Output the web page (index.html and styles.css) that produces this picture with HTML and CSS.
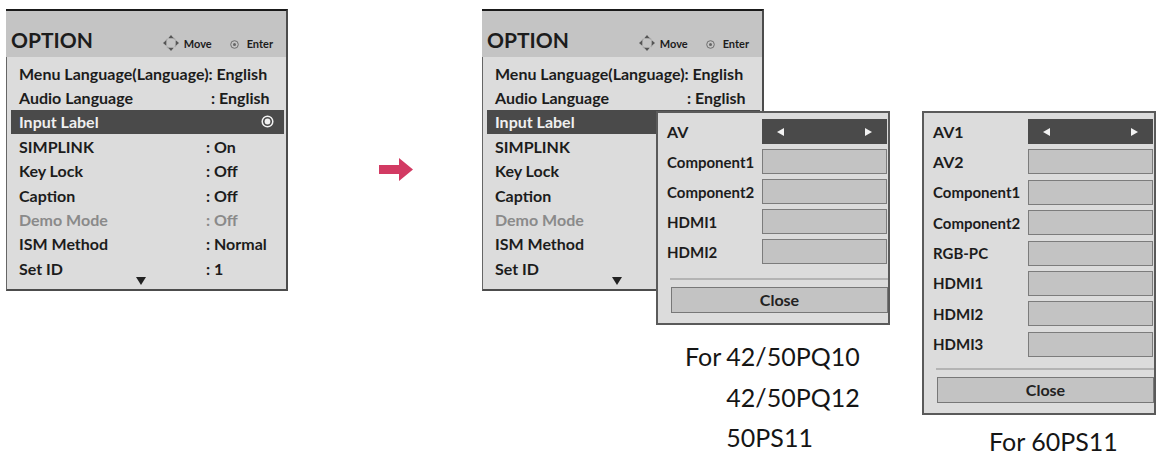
FILE: index.html
```html
<!DOCTYPE html>
<html lang="en">
<head>
    <meta charset="UTF-8">
    <meta name="viewport" content="width=device-width, initial-scale=1.0">
    <title>OPTION - Input Label</title>
    <link rel="stylesheet" href="styles.css">
</head>
<body>
<div class="page">

    <!-- Menú OPTION (antes) -->
    <section class="menu">
        <div class="menu-head">
            <h2 class="menu-title">OPTION</h2>
            <span class="hint hint-move">
                <svg class="icon-move" width="18" height="18" viewBox="0 0 18 18">
                    <circle cx="9" cy="9" r="5.5" fill="none" stroke="#a8a8a8" stroke-width="1.3" stroke-dasharray="3.2 5.4" stroke-dashoffset="-1.2"/>
                    <polygon points="9,1 6.3,4.3 11.7,4.3" fill="#555"/>
                    <polygon points="9,17 6.3,13.7 11.7,13.7" fill="#555"/>
                    <polygon points="1,9 4.3,6.3 4.3,11.7" fill="#555"/>
                    <polygon points="17,9 13.7,6.3 13.7,11.7" fill="#555"/>
                </svg>Move</span>
            <span class="hint hint-enter">
                <svg class="icon-enter" width="9" height="9" viewBox="0 0 9 9">
                    <circle cx="4.5" cy="4.5" r="3.8" fill="none" stroke="#666" stroke-width="0.9"/>
                    <circle cx="4.5" cy="4.5" r="1.5" fill="#666"/>
                </svg>Enter</span>
        </div>
        <div class="menu-body">
            <ul class="menu-list">
                <li class="menu-row">Menu Language(Language): English</li>
                <li class="menu-row"><span class="row-label">Audio Language</span><span class="row-value row-value-wide">: English</span></li>
                <li class="menu-row menu-row-on"><span class="row-label">Input Label</span>
                    <svg class="icon-radio" width="13" height="13" viewBox="0 0 13 13">
                        <circle cx="6.5" cy="6.5" r="5.3" fill="none" stroke="#f2f2f2" stroke-width="1.5"/>
                        <circle cx="6.5" cy="6.5" r="2.9" fill="#f2f2f2"/>
                    </svg>
                </li>
                <li class="menu-row"><span class="row-label">SIMPLINK</span><span class="row-value">: On</span></li>
                <li class="menu-row"><span class="row-label">Key Lock</span><span class="row-value">: Off</span></li>
                <li class="menu-row"><span class="row-label">Caption</span><span class="row-value">: Off</span></li>
                <li class="menu-row menu-row-off"><span class="row-label">Demo Mode</span><span class="row-value">: Off</span></li>
                <li class="menu-row"><span class="row-label">ISM Method</span><span class="row-value">: Normal</span></li>
                <li class="menu-row"><span class="row-label">Set ID</span><span class="row-value">: 1</span></li>
            </ul>
            <svg class="more" width="10" height="8" viewBox="0 0 10 8"><polygon points="0,0 10,0 5,8" fill="#222"/></svg>
        </div>
    </section>

    <!-- Flecha -->
    <svg class="arrow" width="34" height="23" viewBox="0 0 34 23">
        <polygon points="0,7 20,7 20,0 34,11.5 20,23 20,16 0,16" fill="#d23a63"/>
    </svg>

    <!-- Menú OPTION con ventana Input Label -->
    <div class="stack">
        <section class="menu">
            <div class="menu-head">
                <h2 class="menu-title">OPTION</h2>
                <span class="hint hint-move">
                    <svg class="icon-move" width="18" height="18" viewBox="0 0 18 18">
                        <circle cx="9" cy="9" r="5.5" fill="none" stroke="#a8a8a8" stroke-width="1.3" stroke-dasharray="3.2 5.4" stroke-dashoffset="-1.2"/>
                        <polygon points="9,1 6.3,4.3 11.7,4.3" fill="#555"/>
                        <polygon points="9,17 6.3,13.7 11.7,13.7" fill="#555"/>
                        <polygon points="1,9 4.3,6.3 4.3,11.7" fill="#555"/>
                        <polygon points="17,9 13.7,6.3 13.7,11.7" fill="#555"/>
                    </svg>Move</span>
                <span class="hint hint-enter">
                    <svg class="icon-enter" width="9" height="9" viewBox="0 0 9 9">
                        <circle cx="4.5" cy="4.5" r="3.8" fill="none" stroke="#666" stroke-width="0.9"/>
                        <circle cx="4.5" cy="4.5" r="1.5" fill="#666"/>
                    </svg>Enter</span>
            </div>
            <div class="menu-body">
                <ul class="menu-list">
                    <li class="menu-row">Menu Language(Language): English</li>
                    <li class="menu-row"><span class="row-label">Audio Language</span><span class="row-value row-value-wide">: English</span></li>
                    <li class="menu-row menu-row-on"><span class="row-label">Input Label</span></li>
                    <li class="menu-row"><span class="row-label">SIMPLINK</span></li>
                    <li class="menu-row"><span class="row-label">Key Lock</span></li>
                    <li class="menu-row"><span class="row-label">Caption</span></li>
                    <li class="menu-row menu-row-off"><span class="row-label">Demo Mode</span></li>
                    <li class="menu-row"><span class="row-label">ISM Method</span></li>
                    <li class="menu-row"><span class="row-label">Set ID</span></li>
                </ul>
                <svg class="more" width="10" height="8" viewBox="0 0 10 8"><polygon points="0,0 10,0 5,8" fill="#222"/></svg>
            </div>
        </section>

        <div class="stack-popup">
            <div class="popup">
                <div class="popup-grid">
                    <span class="popup-label popup-label-lg">AV</span>
                    <span class="popup-box popup-box-on"><i class="tri tri-left"></i><i class="tri tri-right"></i></span>
                    <span class="popup-label">Component1</span><span class="popup-box"></span>
                    <span class="popup-label">Component2</span><span class="popup-box"></span>
                    <span class="popup-label">HDMI1</span><span class="popup-box"></span>
                    <span class="popup-label">HDMI2</span><span class="popup-box"></span>
                </div>
                <div class="popup-sep"></div>
                <div class="popup-close">Close</div>
            </div>
            <div class="caption caption-multi">
                <span>For</span>
                <div class="caption-models">
                    <span>42/50PQ10</span>
                    <span>42/50PQ12</span>
                    <span>50PS11</span>
                </div>
            </div>
        </div>
    </div>

    <!-- Ventana Input Label para 60PS11 -->
    <div class="figure-right">
        <div class="popup popup-tall">
            <div class="popup-grid">
                <span class="popup-label popup-label-lg">AV1</span>
                <span class="popup-box popup-box-on"><i class="tri tri-left"></i><i class="tri tri-right"></i></span>
                <span class="popup-label popup-label-lg">AV2</span><span class="popup-box"></span>
                <span class="popup-label">Component1</span><span class="popup-box"></span>
                <span class="popup-label">Component2</span><span class="popup-box"></span>
                <span class="popup-label">RGB-PC</span><span class="popup-box"></span>
                <span class="popup-label">HDMI1</span><span class="popup-box"></span>
                <span class="popup-label">HDMI2</span><span class="popup-box"></span>
                <span class="popup-label">HDMI3</span><span class="popup-box"></span>
            </div>
            <div class="popup-sep"></div>
            <div class="popup-close">Close</div>
        </div>
        <p class="caption caption-single">For 60PS11</p>
    </div>

</div>
</body>
</html>
```

FILE: styles.css
```css
body {
    margin: 0;
    background-color: #fff;
    font-family: Lato, 'Open Sans', sans-serif;
    color: #1c1c1c;
}

.page {
    display: flex;
    align-items: flex-start;
    padding: 9px 0 0 6px;
}

/* Menú */
.menu {
    width: 282px;
    box-sizing: border-box;
    border-top: 2px solid #1a1a1a;
    border-right: 2px solid #4c4c4c;
}

.menu-head {
    display: flex;
    align-items: baseline;
    height: 46px;
    box-sizing: border-box;
    padding: 16px 13px 0 5px;
    background-color: #c4c4c4;
}

.menu-title {
    margin: 0;
    font-size: 21px;
    font-weight: 700;
    line-height: 26px;
}

.hint {
    font-size: 11px;
    font-weight: 700;
}

.hint svg {
    vertical-align: middle;
}

.hint-move {
    margin-left: auto;
}

.icon-move {
    margin: -4px 4px 0 0;
}

.hint-enter {
    margin-left: 18px;
}

.icon-enter {
    margin: -2px 8px 0 0;
}

.menu-body {
    height: 234px;
    box-sizing: border-box;
    padding-top: 4px;
    background-color: #dcdcdc;
    border-left: 1px solid #666;
    border-bottom: 2px solid #4c4c4c;
}

.menu-list {
    list-style: none;
    margin: 0;
    padding: 0;
}

.menu-row {
    display: flex;
    align-items: center;
    height: 24.4px;
    margin: 0 2px 0 4px;
    padding-left: 8px;
    font-size: 16px;
    font-weight: 700;
    white-space: nowrap;
}

.menu-row-on {
    background-color: #4a4a4a;
    color: #f0f0f0;
}

.menu-row-off {
    color: #8a8a8a;
}

.row-label {
    width: 187px;
}

.row-value-wide {
    padding-left: 5px;
}

.icon-radio {
    margin: 0 10px 0 auto;
}

.more {
    display: block;
    margin: -4px 0 0 129px;
}

/* Flecha */
.arrow {
    flex: none;
    margin: 149px 0 0 91px;
}

/* Menú con ventana encima */
.stack {
    display: grid;
    align-items: start;
    margin-left: 69px;
}

.stack > * {
    grid-area: 1 / 1;
}

.stack-popup {
    margin: 102px 0 0 174px;
}

.figure-right {
    margin: 102px 0 0 32px;
}

/* Ventana Input Label */
.popup {
    width: 234px;
    box-sizing: border-box;
    padding: 6px 1px 10px 9px;
    background-color: #dcdcdc;
    border: 2px solid #5a5a5a;
}

.popup-grid {
    display: grid;
    grid-template-columns: 95px 125px;
    grid-auto-rows: 25px;
    row-gap: 5px;
    align-items: center;
}

.popup-tall .popup-grid {
    row-gap: 5.4px;
}

.popup-label {
    font-size: 15px;
    font-weight: 700;
    white-space: nowrap;
}

.popup-label-lg {
    font-size: 16px;
}

.popup-box {
    display: flex;
    align-items: center;
    justify-content: space-between;
    height: 25px;
    box-sizing: border-box;
    padding: 0 14px;
    background-color: #c3c3c3;
    border: 1px solid #7c7c7c;
}

.popup-box-on {
    background-color: #4a4a4a;
    border-color: #4a4a4a;
}

.tri {
    width: 0;
    height: 0;
    border-top: 4.5px solid transparent;
    border-bottom: 4.5px solid transparent;
}

.tri-left {
    border-right: 7px solid #f2f2f2;
}

.tri-right {
    border-left: 7px solid #f2f2f2;
}

.popup-sep {
    height: 2px;
    margin: 14px -1px 0 3px;
    background-color: #b4b4b4;
}

.popup-tall .popup-sep {
    margin-top: 11px;
}

.popup-close {
    height: 26px;
    box-sizing: border-box;
    margin: 7px -1px 0 4px;
    background-color: #c3c3c3;
    border: 1px solid #777;
    text-align: center;
    font-size: 16px;
    font-weight: 700;
    line-height: 24px;
    color: #222;
}

/* Leyendas */
.caption {
    margin: 0;
    font-size: 25px;
    line-height: 30px;
    color: #151515;
}

.caption-multi {
    display: flex;
    gap: 5px;
    margin: 16px 0 0 29px;
}

.caption-models {
    display: flex;
    flex-direction: column;
    gap: 10.5px;
}

.caption-single {
    margin: 16px 0 0 67px;
    line-height: 20px;
}
```
